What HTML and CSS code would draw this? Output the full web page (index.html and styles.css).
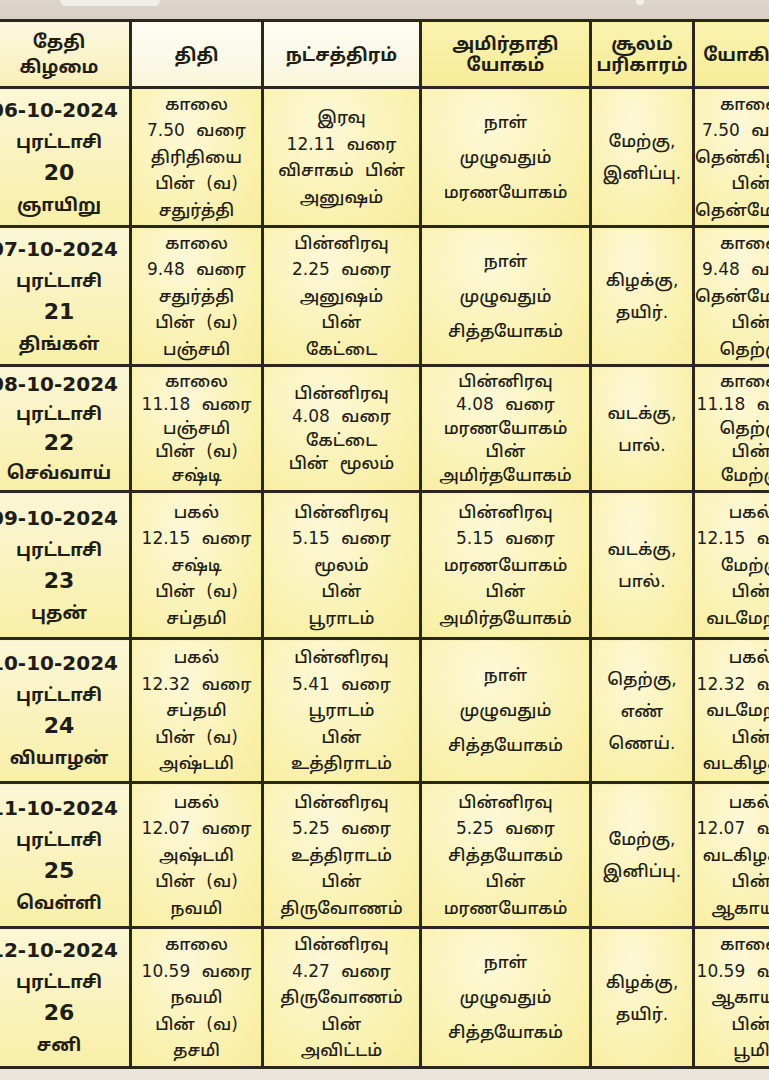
FILE: index.html
```html
<!DOCTYPE html>
<html lang="ta">
<head>
<meta charset="utf-8">
<title>பஞ்சாங்கம்</title>
<link rel="stylesheet" href="styles.css">
</head>
<body>
<div class="page">
  <div class="topbar"><span class="blob"></span><span class="mark"></span></div>
  <div class="frame">
    <table class="cal">
      <colgroup>
        <col class="c1"><col class="c2"><col class="c3"><col class="c4"><col class="c5"><col class="c6">
      </colgroup>
      <thead>
        <tr>
          <th class="h-cream">தேதி<br>கிழமை</th>
          <th class="h-white">திதி</th>
          <th class="h-white">நட்சத்திரம்</th>
          <th class="h-yellow tight">அமிர்தாதி<br>யோகம்</th>
          <th class="h-yellow tight">சூலம்<br>பரிகாரம்</th>
          <th class="h-yellow">யோகினி</th>
        </tr>
      </thead>
      <tbody>
        <tr>
          <td class="date"><b class="dt">06-10-2024</b><br>புரட்டாசி<br><b class="dn">20</b><br>ஞாயிறு</td>
          <td>காலை<br>7.50 வரை<br>திரிதியை<br>பின் (வ)<br>சதுர்த்தி</td>
          <td>இரவு<br>12.11 வரை<br>விசாகம் பின்<br>அனுஷம்</td>
          <td class="loose">நாள்<br>முழுவதும்<br>மரணயோகம்</td>
          <td class="mid">மேற்கு,<br>இனிப்பு.</td>
          <td>காலை<br>7.50 வரை<br>தென்கிழக்கு<br>பின்<br>தென்மேற்கு</td>
        </tr>
        <tr>
          <td class="date"><b class="dt">07-10-2024</b><br>புரட்டாசி<br><b class="dn">21</b><br>திங்கள்</td>
          <td>காலை<br>9.48 வரை<br>சதுர்த்தி<br>பின் (வ)<br>பஞ்சமி</td>
          <td>பின்னிரவு<br>2.25 வரை<br>அனுஷம்<br>பின்<br>கேட்டை</td>
          <td class="loose">நாள்<br>முழுவதும்<br>சித்தயோகம்</td>
          <td class="mid">கிழக்கு,<br>தயிர்.</td>
          <td>காலை<br>9.48 வரை<br>தென்மேற்கு<br>பின்<br>தெற்கு</td>
        </tr>
        <tr>
          <td class="date"><b class="dt">08-10-2024</b><br>புரட்டாசி<br><b class="dn">22</b><br>செவ்வாய்</td>
          <td>காலை<br>11.18 வரை<br>பஞ்சமி<br>பின் (வ)<br>சஷ்டி</td>
          <td>பின்னிரவு<br>4.08 வரை<br>கேட்டை<br>பின் மூலம்</td>
          <td>பின்னிரவு<br>4.08 வரை<br>மரணயோகம்<br>பின்<br>அமிர்தயோகம்</td>
          <td class="mid">வடக்கு,<br>பால்.</td>
          <td>காலை<br>11.18 வரை<br>தெற்கு<br>பின்<br>மேற்கு</td>
        </tr>
        <tr>
          <td class="date"><b class="dt">09-10-2024</b><br>புரட்டாசி<br><b class="dn">23</b><br>புதன்</td>
          <td>பகல்<br>12.15 வரை<br>சஷ்டி<br>பின் (வ)<br>சப்தமி</td>
          <td>பின்னிரவு<br>5.15 வரை<br>மூலம்<br>பின்<br>பூராடம்</td>
          <td>பின்னிரவு<br>5.15 வரை<br>மரணயோகம்<br>பின்<br>அமிர்தயோகம்</td>
          <td class="mid">வடக்கு,<br>பால்.</td>
          <td>பகல்<br>12.15 வரை<br>மேற்கு<br>பின்<br>வடமேற்கு</td>
        </tr>
        <tr>
          <td class="date"><b class="dt">10-10-2024</b><br>புரட்டாசி<br><b class="dn">24</b><br>வியாழன்</td>
          <td>பகல்<br>12.32 வரை<br>சப்தமி<br>பின் (வ)<br>அஷ்டமி</td>
          <td>பின்னிரவு<br>5.41 வரை<br>பூராடம்<br>பின்<br>உத்திராடம்</td>
          <td class="loose">நாள்<br>முழுவதும்<br>சித்தயோகம்</td>
          <td class="mid">தெற்கு,<br>எண்<br>ணெய்.</td>
          <td>பகல்<br>12.32 வரை<br>வடமேற்கு<br>பின்<br>வடகிழக்கு</td>
        </tr>
        <tr>
          <td class="date"><b class="dt">11-10-2024</b><br>புரட்டாசி<br><b class="dn">25</b><br>வெள்ளி</td>
          <td>பகல்<br>12.07 வரை<br>அஷ்டமி<br>பின் (வ)<br>நவமி</td>
          <td>பின்னிரவு<br>5.25 வரை<br>உத்திராடம்<br>பின்<br>திருவோணம்</td>
          <td>பின்னிரவு<br>5.25 வரை<br>சித்தயோகம்<br>பின்<br>மரணயோகம்</td>
          <td class="mid">மேற்கு,<br>இனிப்பு.</td>
          <td>பகல்<br>12.07 வரை<br>வடகிழக்கு<br>பின்<br>ஆகாயம்</td>
        </tr>
        <tr>
          <td class="date"><b class="dt">12-10-2024</b><br>புரட்டாசி<br><b class="dn">26</b><br>சனி</td>
          <td>காலை<br>10.59 வரை<br>நவமி<br>பின் (வ)<br>தசமி</td>
          <td>பின்னிரவு<br>4.27 வரை<br>திருவோணம்<br>பின்<br>அவிட்டம்</td>
          <td class="loose">நாள்<br>முழுவதும்<br>சித்தயோகம்</td>
          <td class="mid">கிழக்கு,<br>தயிர்.</td>
          <td>காலை<br>10.59 வரை<br>ஆகாயம்<br>பின்<br>பூமி</td>
        </tr>
      </tbody>
    </table>
  </div>
  <div class="bottombar"></div>
</div>
</body>
</html>
```
FILE: styles.css
```css
html, body {
  margin: 0;
  padding: 0;
  background: #e9e3dc;
}
.page {
  width: 769px;
  height: 1080px;
  overflow: hidden;
  font-family: "DejaVu Sans", "Noto Sans Tamil", "Lohit Tamil", "Noto Sans", sans-serif;
  color: #1f1d16;
}
.topbar {
  height: 19px;
  background: linear-gradient(180deg, #ddd6ce 0%, #d8cfc5 100%);
  position: relative;
}
.blob {
  position: absolute;
  left: 60px;
  top: 0;
  width: 100px;
  height: 6px;
  background: #f1ede8;
  border-radius: 0 0 6px 6px;
}
.mark {
  position: absolute;
  left: 636px;
  top: 0;
  width: 8px;
  height: 5px;
  background: #f4f1ec;
  border-radius: 0 0 4px 4px;
}
.frame {
  width: 769px;
  overflow: hidden;
}
.cal {
  margin-left: -14px;
  border-collapse: collapse;
  table-layout: fixed;
  width: 822px;
  background: #f9f1a8;
}
.c1 { width: 143px; }
.c2 { width: 132px; }
.c3 { width: 158px; }
.c4 { width: 170px; }
.c5 { width: 103px; }
.c6 { width: 116px; }
.cal th, .cal td {
  border: 3px solid #2a281e;
  text-align: center;
  vertical-align: middle;
  padding: 0;
  white-space: nowrap;
  overflow: hidden;
}
.cal th {
  height: 64px;
  font-size: 18px;
  font-weight: 700;
  line-height: 25px;
}
.cal th.tight { line-height: 21px; }
.h-cream { background: linear-gradient(180deg, #fcf8e2, #f8efb8); }
.h-white { background: linear-gradient(180deg, #fdfcf4, #f9f6dc); }
.h-yellow { background: linear-gradient(180deg, #f9f2b0, #f6ec98); }
.cal td {
  font-size: 17px;
  line-height: 26.5px;
  font-weight: 500;
  word-spacing: 6px;
  background: radial-gradient(ellipse at 40% 25%, #fdf8d8 0%, #faf2b4 55%, #f7ec9c 100%);
}
.cal td.date {
  font-size: 18px;
  line-height: 31px;
  font-weight: 700;
  word-spacing: 0;
  background: linear-gradient(180deg, #fbf6d6 0%, #f8efa8 100%);
}
.dt {
  display: inline-block;
  margin-right: 10px;
  font-size: 20px;
  font-weight: 700;
}
.dn {
  font-size: 22px;
  font-weight: 700;
}
.cal td.loose { line-height: 35px; }
.cal td.mid { line-height: 32px; word-spacing: 0; }
.cal tbody tr:nth-child(1) td { height: 136px; }
.cal tbody tr:nth-child(2) td { height: 136px; }
.cal tbody tr:nth-child(3) td { height: 123px; line-height: 23.5px; }
.cal tbody tr:nth-child(3) td.date { line-height: 29px; }
.cal tbody tr:nth-child(3) td.mid { line-height: 32px; }
.cal tbody tr:nth-child(4) td { height: 144px; }
.cal tbody tr:nth-child(5) td { height: 141px; }
.cal tbody tr:nth-child(6) td { height: 142px; }
.cal tbody tr:nth-child(7) td { height: 137px; }
.bottombar {
  height: 20px;
  background: #ebe5de;
}
```
